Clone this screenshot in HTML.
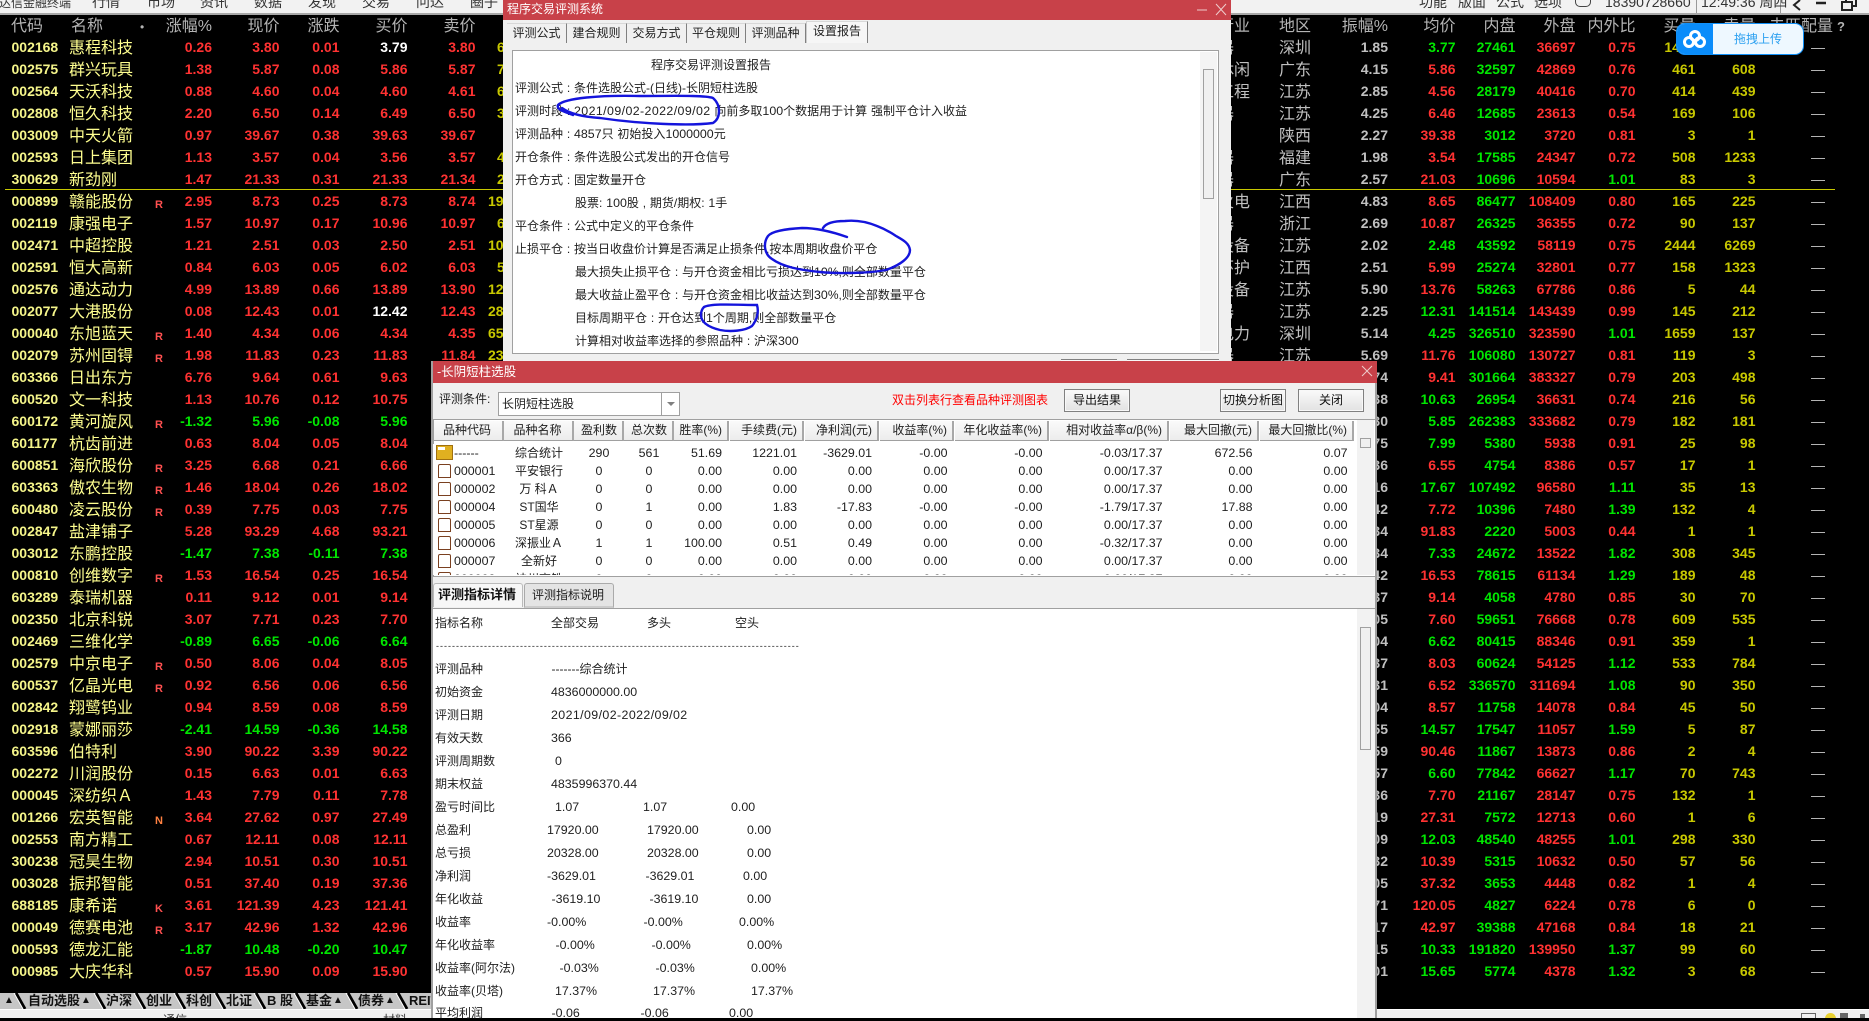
<!DOCTYPE html>
<html lang="zh"><head><meta charset="utf-8"><title>程序交易评测系统</title>
<style>
html,body{margin:0;padding:0;background:#000}
body{width:1869px;height:1018px;overflow:hidden;position:relative;font-family:"Liberation Sans","Noto Sans CJK SC",sans-serif}
p{position:absolute;margin:0;white-space:nowrap;line-height:16px}
.box{position:absolute}
.lay{position:absolute;left:0;top:0;width:0;height:0}
#L,#R{position:absolute;left:0;top:36px;width:1869px;z-index:1}
#L>div,#R>div{position:relative;height:22px}
#L b,#L u,#L em,#L i,#R u,#R i{position:absolute;top:0;line-height:22px;height:22px;font-style:normal;text-decoration:none;white-space:nowrap}
#L b{left:11.5px;font-size:14px;color:#f5f58a}
#L u{left:69px;top:2px;font-size:16px;color:#ffff90;font-weight:400}
#L em{left:155px;font-size:11px;font-weight:700;color:#ff5050;top:4px}
#L i,#R i{width:60px;text-align:right;font-size:14px;font-weight:700;color:#ff3232}
#L i:nth-of-type(1){left:152px}
#L i:nth-of-type(2){left:219.5px}
#L i:nth-of-type(3){left:279.5px}
#L i:nth-of-type(4){left:347.5px}
#L i:nth-of-type(5){left:415.5px}
#L i:nth-of-type(6){left:497px;text-align:left;color:#c8c800}
#L .g i{color:#00e600}
#L i.w{color:#fff}
#R u{top:2px;font-size:16px;color:#c0c0c0}
#R u:nth-of-type(1){left:1218px}
#R u:nth-of-type(2){left:1279px}
#R i:nth-of-type(1){left:1328px;color:#c0c0c0}
#R i:nth-of-type(2){left:1395.5px}
#R i:nth-of-type(3){left:1455.5px;color:#00e600}
#R i:nth-of-type(4){left:1515.5px}
#R i:nth-of-type(5){left:1575.5px}
#R i:nth-of-type(6){left:1635.5px;color:#c8c800}
#R i:nth-of-type(7){left:1695.5px;color:#c8c800}
#R i:nth-of-type(8){left:1765px;color:#c0c0c0;font-weight:400;width:60px}
#R i.g{color:#00e600}
.hd{z-index:1;font-size:16px;color:#b4b4b4;line-height:22px;top:16px}
.hr{width:70px;text-align:right}
.mn{z-index:3;font-size:14px;color:#333;top:-6px}
.d{font-size:12px;color:#202020}
.v{font-size:12.4px}
.dt{font-size:12.4px;letter-spacing:.4px}
.tab{position:absolute;top:23px;height:19px;background:#f0f0f0;border-right:1px solid #808080;border-top:1px solid #d8d8d8;font-size:12px;line-height:19px;text-align:center;color:#202020}
.btn{position:absolute;border:1px solid #808080;background:linear-gradient(#fafafa,#e2e2e2);font-size:12px;line-height:21px;text-align:center;color:#111;box-shadow:inset 0 0 0 1px #f8f8f8;height:21px;width:64px;top:389px}
.th{position:absolute;top:421px;height:19px;background:linear-gradient(#fafafa,#ececec);border-right:2px solid #a8a8a8;border-bottom:1px solid #a0a0a0;font-size:12px;line-height:19px;color:#202020;white-space:nowrap;box-sizing:content-box}
#G{position:absolute;left:433px;top:444px;width:924px;height:131px;overflow:hidden;background:#fff}
#G>div{position:relative;height:18px}
#G s,#G i{position:absolute;top:0;line-height:18px;height:18px;font-style:normal;text-decoration:none;font-size:12.4px;color:#202020;white-space:nowrap}
#G s:nth-of-type(1){left:21px}
#G s:nth-of-type(2){left:71px;width:70px;text-align:center;font-size:12px}
#G s:nth-of-type(3){left:146px;width:40px;text-align:center}
#G s:nth-of-type(4){left:196px;width:40px;text-align:center}
#G i{width:80px;text-align:right}
#G i:nth-of-type(1){left:209px}
#G i:nth-of-type(2){left:284px}
#G i:nth-of-type(3){left:359px}
#G i:nth-of-type(4){left:434.5px}
#G i:nth-of-type(5){left:529.5px}
#G i:nth-of-type(6){left:649.5px}
#G i:nth-of-type(7){left:739.5px}
#G i:nth-of-type(8){left:834.5px}
.doc{position:absolute;left:5px;top:2px;width:11px;height:12px;border:1px solid #7a4020;border-radius:2px 2px 0 0;background:#fff}
.fold{position:absolute;left:3px;top:1px;width:15px;height:13px;background:#e0b020;border:1px solid #a07010}
.fold:before{content:"";position:absolute;left:1px;top:1px;width:7px;height:3px;background:#fff}
.ln{font-size:12px;color:#202020;z-index:1}
</style></head><body>

<!-- top bar -->
<div class="box" style="left:0;top:0;width:1869px;height:13px;background:#f2f2f2;border-bottom:2px solid #a8a8a8;z-index:2"></div>
<div class="box" style="left:0;top:0;width:1869px;height:13px;overflow:hidden;z-index:3">
<p style="left:-1px;top:-5px;font-size:12px;color:#333">达信金融终端</p>
<p class="mn" style="left:92px">行情</p><p class="mn" style="left:147px">市场</p><p class="mn" style="left:200px">资讯</p><p class="mn" style="left:254px">数据</p><p class="mn" style="left:308px">发现</p><p class="mn" style="left:362px">交易</p><p class="mn" style="left:416px">问达</p><p class="mn" style="left:470px">圈子</p>
<p class="mn" style="left:1419px">功能</p><p class="mn" style="left:1458px">版面</p><p class="mn" style="left:1496px">公式</p><p class="mn" style="left:1534px">选项</p>
<p class="mn" style="left:1605px">18390728660</p><p class="mn" style="left:1701px">12:49:36 周四</p>
<div class="box" style="left:1575px;top:0;width:14px;height:6px;border:1px solid #444;border-top:0;border-radius:0 0 5px 5px"></div>
<div class="box" style="left:1696px;top:0;width:1px;height:13px;background:#999"></div>
<div class="box" style="left:1780px;top:0;width:1px;height:13px;background:#999"></div>
<svg class="box" style="left:1790px;top:0" width="79" height="13"><path d="M10 0L4 5L10 10" fill="none" stroke="#222" stroke-width="2"/><path d="M26 3H36" stroke="#222" stroke-width="2.5"/><path d="M52 2H62V10H52ZM56 2V-2H66V6H62" fill="none" stroke="#222" stroke-width="2"/></svg>
</div>

<!-- headers -->
<p class="hd" style="left:11px">代码</p><p class="hd" style="left:71px">名称</p><p class="hd" style="left:140px;font-size:12px">•</p>
<p class="hd hr" style="left:142px">涨幅%</p><p class="hd hr" style="left:209.5px">现价</p><p class="hd hr" style="left:269.5px">涨跌</p><p class="hd hr" style="left:337.5px">买价</p><p class="hd hr" style="left:405.5px">卖价</p>
<p class="hd" style="left:1218px">行业</p><p class="hd" style="left:1279px">地区</p><p class="hd hr" style="left:1318px">振幅%</p><p class="hd hr" style="left:1385.5px">均价</p><p class="hd hr" style="left:1445.5px">内盘</p><p class="hd hr" style="left:1505.5px">外盘</p><p class="hd hr" style="left:1565.5px">内外比</p><p class="hd hr" style="left:1625.5px">买量</p><p class="hd hr" style="left:1685.5px">卖量</p><p class="hd" style="left:1769px">未匹配量</p><p class="hd" style="left:1837px;font-size:13px;font-weight:700">?</p>

<div id="L">
<div><b>002168</b><u>惠程科技</u><i>0.26</i><i>3.80</i><i>0.01</i><i class="w">3.79</i><i>3.80</i><i>690</i></div>
<div><b>002575</b><u>群兴玩具</u><i>1.38</i><i>5.87</i><i>0.08</i><i>5.86</i><i>5.87</i><i>710</i></div>
<div><b>002564</b><u>天沃科技</u><i>0.88</i><i>4.60</i><i>0.04</i><i>4.60</i><i>4.61</i><i>650</i></div>
<div><b>002808</b><u>恒久科技</u><i>2.20</i><i>6.50</i><i>0.14</i><i>6.49</i><i>6.50</i><i>320</i></div>
<div><b>003009</b><u>中天火箭</u><i>0.97</i><i>39.67</i><i>0.38</i><i>39.63</i><i>39.67</i></div>
<div><b>002593</b><u>日上集团</u><i>1.13</i><i>3.57</i><i>0.04</i><i>3.56</i><i>3.57</i><i>410</i></div>
<div><b>300629</b><u>新劲刚</u><i>1.47</i><i>21.33</i><i>0.31</i><i>21.33</i><i>21.34</i><i>210</i></div>
<div><b>000899</b><u>赣能股份</u><em>R</em><i>2.95</i><i>8.73</i><i>0.25</i><i>8.73</i><i>8.74</i><i style="left:488px">190</i></div>
<div><b>002119</b><u>康强电子</u><i>1.57</i><i>10.97</i><i>0.17</i><i>10.96</i><i>10.97</i><i>610</i></div>
<div><b>002471</b><u>中超控股</u><i>1.21</i><i>2.51</i><i>0.03</i><i>2.50</i><i>2.51</i><i style="left:488px">100</i></div>
<div><b>002591</b><u>恒大高新</u><i>0.84</i><i>6.03</i><i>0.05</i><i>6.02</i><i>6.03</i><i>530</i></div>
<div><b>002576</b><u>通达动力</u><i>4.99</i><i>13.89</i><i>0.66</i><i>13.89</i><i>13.90</i><i style="left:488px">120</i></div>
<div><b>002077</b><u>大港股份</u><i>0.08</i><i>12.43</i><i>0.01</i><i class="w">12.42</i><i>12.43</i><i style="left:488px">280</i></div>
<div><b>000040</b><u>东旭蓝天</u><em>R</em><i>1.40</i><i>4.34</i><i>0.06</i><i>4.34</i><i>4.35</i><i style="left:488px">650</i></div>
<div><b>002079</b><u>苏州固锝</u><em>R</em><i>1.98</i><i>11.83</i><i>0.23</i><i>11.83</i><i>11.84</i><i style="left:488px">230</i></div>
<div><b>603366</b><u>日出东方</u><i>6.76</i><i>9.64</i><i>0.61</i><i>9.63</i></div>
<div><b>600520</b><u>文一科技</u><i>1.13</i><i>10.76</i><i>0.12</i><i>10.75</i></div>
<div class="g"><b>600172</b><u>黄河旋风</u><em>R</em><i>-1.32</i><i>5.96</i><i>-0.08</i><i>5.96</i></div>
<div><b>601177</b><u>杭齿前进</u><i>0.63</i><i>8.04</i><i>0.05</i><i>8.04</i></div>
<div><b>600851</b><u>海欣股份</u><em>R</em><i>3.25</i><i>6.68</i><i>0.21</i><i>6.66</i></div>
<div><b>603363</b><u>傲农生物</u><em>R</em><i>1.46</i><i>18.04</i><i>0.26</i><i>18.02</i></div>
<div><b>600480</b><u>凌云股份</u><em>R</em><i>0.39</i><i>7.75</i><i>0.03</i><i>7.75</i></div>
<div><b>002847</b><u>盐津铺子</u><i>5.28</i><i>93.29</i><i>4.68</i><i>93.21</i></div>
<div class="g"><b>003012</b><u>东鹏控股</u><i>-1.47</i><i>7.38</i><i>-0.11</i><i>7.38</i></div>
<div><b>000810</b><u>创维数字</u><em>R</em><i>1.53</i><i>16.54</i><i>0.25</i><i>16.54</i></div>
<div><b>603289</b><u>泰瑞机器</u><i>0.11</i><i>9.12</i><i>0.01</i><i>9.14</i></div>
<div><b>002350</b><u>北京科锐</u><i>3.07</i><i>7.71</i><i>0.23</i><i>7.70</i></div>
<div class="g"><b>002469</b><u>三维化学</u><i>-0.89</i><i>6.65</i><i>-0.06</i><i>6.64</i></div>
<div><b>002579</b><u>中京电子</u><em>R</em><i>0.50</i><i>8.06</i><i>0.04</i><i>8.05</i></div>
<div><b>600537</b><u>亿晶光电</u><em>R</em><i>0.92</i><i>6.56</i><i>0.06</i><i>6.56</i></div>
<div><b>002842</b><u>翔鹭钨业</u><i>0.94</i><i>8.59</i><i>0.08</i><i>8.59</i></div>
<div class="g"><b>002918</b><u>蒙娜丽莎</u><i>-2.41</i><i>14.59</i><i>-0.36</i><i>14.58</i></div>
<div><b>603596</b><u>伯特利</u><i>3.90</i><i>90.22</i><i>3.39</i><i>90.22</i></div>
<div><b>002272</b><u>川润股份</u><i>0.15</i><i>6.63</i><i>0.01</i><i>6.63</i></div>
<div><b>000045</b><u>深纺织Ａ</u><i>1.43</i><i>7.79</i><i>0.11</i><i>7.78</i></div>
<div><b>001266</b><u>宏英智能</u><em style="color:#ff8040">N</em><i>3.64</i><i>27.62</i><i>0.97</i><i>27.49</i></div>
<div><b>002553</b><u>南方精工</u><i>0.67</i><i>12.11</i><i>0.08</i><i>12.11</i></div>
<div><b>300238</b><u>冠昊生物</u><i>2.94</i><i>10.51</i><i>0.30</i><i>10.51</i></div>
<div><b>003028</b><u>振邦智能</u><i>0.51</i><i>37.40</i><i>0.19</i><i>37.36</i></div>
<div><b>688185</b><u>康希诺</u><em>K</em><i>3.61</i><i>121.39</i><i>4.23</i><i>121.41</i></div>
<div><b>000049</b><u>德赛电池</u><em>R</em><i>3.17</i><i>42.96</i><i>1.32</i><i>42.96</i></div>
<div class="g"><b>000593</b><u>德龙汇能</u><i>-1.87</i><i>10.48</i><i>-0.20</i><i>10.47</i></div>
<div><b>000985</b><u>大庆华科</u><i>0.57</i><i>15.90</i><i>0.09</i><i>15.90</i></div>
</div>

<div id="R">
<div><u>器</u><u>深圳</u><i>1.85</i><i class="g">3.77</i><i>27461</i><i>36697</i><i>0.75</i><i>1433</i><i>608</i><i>—</i></div>
<div><u>休闲</u><u>广东</u><i>4.15</i><i>5.86</i><i>32597</i><i>42869</i><i>0.76</i><i>461</i><i>608</i><i>—</i></div>
<div><u>工程</u><u>江苏</u><i>2.85</i><i>4.56</i><i>28179</i><i>40416</i><i>0.70</i><i>414</i><i>439</i><i>—</i></div>
<div><u>器</u><u>江苏</u><i>4.25</i><i>6.46</i><i>12685</i><i>23613</i><i>0.54</i><i>169</i><i>106</i><i>—</i></div>
<div><u></u><u>陕西</u><i>2.27</i><i>39.38</i><i>3012</i><i>3720</i><i>0.81</i><i>3</i><i>1</i><i>—</i></div>
<div><u>器</u><u>福建</u><i>1.98</i><i>3.54</i><i>17585</i><i>24347</i><i>0.72</i><i>508</i><i>1233</i><i>—</i></div>
<div><u>器</u><u>广东</u><i>2.57</i><i>21.03</i><i>10696</i><i>10594</i><i class="g">1.01</i><i>83</i><i>3</i><i>—</i></div>
<div><u>火电</u><u>江西</u><i>4.83</i><i>8.65</i><i>86477</i><i>108409</i><i>0.80</i><i>165</i><i>225</i><i>—</i></div>
<div><u>器</u><u>浙江</u><i>2.69</i><i>10.87</i><i>26325</i><i>36355</i><i>0.72</i><i>90</i><i>137</i><i>—</i></div>
<div><u>设备</u><u>江苏</u><i>2.02</i><i class="g">2.48</i><i>43592</i><i>58119</i><i>0.75</i><i>2444</i><i>6269</i><i>—</i></div>
<div><u>环护</u><u>江西</u><i>2.51</i><i>5.99</i><i>25274</i><i>32801</i><i>0.77</i><i>158</i><i>1323</i><i>—</i></div>
<div><u>设备</u><u>江苏</u><i>5.90</i><i>13.76</i><i>58263</i><i>67786</i><i>0.86</i><i>5</i><i>44</i><i>—</i></div>
<div><u>器</u><u>江苏</u><i>2.25</i><i class="g">12.31</i><i>141514</i><i>143439</i><i>0.99</i><i>145</i><i>212</i><i>—</i></div>
<div><u>电力</u><u>深圳</u><i>5.14</i><i class="g">4.25</i><i>326510</i><i>323590</i><i class="g">1.01</i><i>1659</i><i>137</i><i>—</i></div>
<div><u>器</u><u>江苏</u><i>5.69</i><i>11.76</i><i>106080</i><i>130727</i><i>0.81</i><i>119</i><i>3</i><i>—</i></div>
<div><u></u><u></u><i>5.74</i><i>9.41</i><i>301664</i><i>383327</i><i>0.79</i><i>203</i><i>498</i><i>—</i></div>
<div><u></u><u></u><i>3.38</i><i class="g">10.63</i><i>26954</i><i>36631</i><i>0.74</i><i>216</i><i>56</i><i>—</i></div>
<div><u></u><u></u><i>3.30</i><i class="g">5.85</i><i>262383</i><i>333682</i><i>0.79</i><i>182</i><i>181</i><i>—</i></div>
<div><u></u><u></u><i>3.75</i><i class="g">7.99</i><i>5380</i><i>5938</i><i>0.91</i><i>25</i><i>98</i><i>—</i></div>
<div><u></u><u></u><i>3.36</i><i>6.55</i><i>4754</i><i>8386</i><i>0.57</i><i>17</i><i>1</i><i>—</i></div>
<div><u></u><u></u><i>3.16</i><i class="g">17.67</i><i>107492</i><i>96580</i><i class="g">1.11</i><i>35</i><i>13</i><i>—</i></div>
<div><u></u><u></u><i>3.42</i><i>7.72</i><i>10396</i><i>7480</i><i class="g">1.39</i><i>132</i><i>4</i><i>—</i></div>
<div><u></u><u></u><i>3.34</i><i>91.83</i><i>2220</i><i>5003</i><i>0.44</i><i>1</i><i>1</i><i>—</i></div>
<div><u></u><u></u><i>3.34</i><i class="g">7.33</i><i>24672</i><i>13522</i><i class="g">1.82</i><i>308</i><i>345</i><i>—</i></div>
<div><u></u><u></u><i>3.42</i><i>16.53</i><i>78615</i><i>61134</i><i class="g">1.29</i><i>189</i><i>48</i><i>—</i></div>
<div><u></u><u></u><i>3.37</i><i>9.14</i><i>4058</i><i>4780</i><i>0.85</i><i>30</i><i>70</i><i>—</i></div>
<div><u></u><u></u><i>3.05</i><i>7.60</i><i>59651</i><i>76668</i><i>0.78</i><i>609</i><i>535</i><i>—</i></div>
<div><u></u><u></u><i>3.04</i><i class="g">6.62</i><i>80415</i><i>88346</i><i>0.91</i><i>359</i><i>1</i><i>—</i></div>
<div><u></u><u></u><i>3.37</i><i>8.03</i><i>60624</i><i>54125</i><i class="g">1.12</i><i>533</i><i>784</i><i>—</i></div>
<div><u></u><u></u><i>3.31</i><i>6.52</i><i>336570</i><i>311694</i><i class="g">1.08</i><i>90</i><i>350</i><i>—</i></div>
<div><u></u><u></u><i>3.04</i><i>8.57</i><i>11758</i><i>14078</i><i>0.84</i><i>45</i><i>50</i><i>—</i></div>
<div><u></u><u></u><i>3.55</i><i class="g">14.57</i><i>17547</i><i>11057</i><i class="g">1.59</i><i>5</i><i>87</i><i>—</i></div>
<div><u></u><u></u><i>3.59</i><i>90.46</i><i>11867</i><i>13873</i><i>0.86</i><i>2</i><i>4</i><i>—</i></div>
<div><u></u><u></u><i>3.57</i><i class="g">6.60</i><i>77842</i><i>66627</i><i class="g">1.17</i><i>70</i><i>743</i><i>—</i></div>
<div><u></u><u></u><i>3.36</i><i>7.70</i><i>21167</i><i>28147</i><i>0.75</i><i>132</i><i>1</i><i>—</i></div>
<div><u></u><u></u><i>3.19</i><i>27.31</i><i>7572</i><i>12713</i><i>0.60</i><i>1</i><i>6</i><i>—</i></div>
<div><u></u><u></u><i>3.09</i><i class="g">12.03</i><i>48540</i><i>48255</i><i class="g">1.01</i><i>298</i><i>330</i><i>—</i></div>
<div><u></u><u></u><i>3.32</i><i>10.39</i><i>5315</i><i>10632</i><i>0.50</i><i>57</i><i>56</i><i>—</i></div>
<div><u></u><u></u><i>3.05</i><i>37.32</i><i>3653</i><i>4448</i><i>0.82</i><i>1</i><i>4</i><i>—</i></div>
<div><u></u><u></u><i>3.71</i><i>120.05</i><i>4827</i><i>6224</i><i>0.78</i><i>6</i><i>0</i><i>—</i></div>
<div><u></u><u></u><i>3.17</i><i>42.97</i><i>39388</i><i>47168</i><i>0.84</i><i>18</i><i>21</i><i>—</i></div>
<div><u></u><u></u><i>3.15</i><i class="g">10.33</i><i>191820</i><i>139950</i><i class="g">1.37</i><i>99</i><i>60</i><i>—</i></div>
<div><u></u><u></u><i>3.01</i><i class="g">15.65</i><i>5774</i><i>4378</i><i class="g">1.32</i><i>3</i><i>68</i><i>—</i></div>
</div>

<div class="box" style="left:5px;top:189px;width:1830px;height:1px;background:#c8c800;z-index:2"></div>

<!-- bottom tab bar -->
<div class="box" style="left:0;top:993px;width:431px;height:16px;background:#c6c6c6;z-index:2"></div>
<svg class="box" style="left:0;top:993px;z-index:2" width="431" height="16"><g fill="none" stroke="#000" stroke-width="3"><path d="M16 0L25 16M96 0L105 16M136 0L145 16M176 0L185 16M216 0L225 16M256 0L265 16M296 0L305 16M348 0L357 16M398 0L407 16"/></g><g fill="none" stroke="#fff" stroke-width="1"><path d="M14 0L23 16M94 0L103 16M134 0L143 16M174 0L183 16M214 0L223 16M254 0L263 16M294 0L303 16M346 0L355 16M396 0L405 16"/></g></svg>
<div class="box" style="left:0;top:993px;width:431px;height:16px;overflow:hidden;z-index:3;font-size:13px;font-weight:700;color:#111;line-height:16px">
<p style="left:4px;font-size:10px">▲</p><p style="left:28px">自动选股</p><p style="left:81px;font-size:10px">▲</p><p style="left:106px">沪深</p><p style="left:146px">创业</p><p style="left:186px">科创</p><p style="left:226px">北证</p><p style="left:267px">B 股</p><p style="left:306px">基金</p><p style="left:333px;font-size:10px">▲</p><p style="left:358px">债券</p><p style="left:385px;font-size:10px">▲</p><p style="left:409px">REIT</p>
</div>
<div class="box" style="left:0;top:1009px;width:1869px;height:1px;background:#fff;z-index:2"></div>
<div class="box" style="left:0;top:1010px;width:1869px;height:8px;background:#f0f0f0;z-index:2;overflow:hidden">
<p style="left:163px;top:2px;font-size:12px;color:#333">通信</p><p style="left:383px;top:2px;font-size:12px;color:#333">材料</p>
<div class="box" style="left:1801px;top:3px;width:13px;height:8px;border:1px solid #666"></div>
<div class="box" style="left:1825px;top:3px;width:11px;height:11px;border-radius:50%;background:#e8d030"></div>
<div class="box" style="left:1840px;top:3px;width:8px;height:8px;background:#666"></div>
<div class="box" style="left:1860px;top:4px;width:5px;height:5px;background:#666"></div>
</div>

<!-- upload widget -->
<div class="box" style="left:1676px;top:23px;width:128px;height:32px;border-radius:9px;background:#eef8ff;box-sizing:border-box;border:1px solid #1090f8;z-index:3;overflow:hidden">
<div class="box" style="left:-1px;top:-1px;width:37px;height:32px;background:#0a8cfa"></div>
<p style="left:36px;top:7px;width:90px;text-align:center;font-size:12px;color:#2ba0f0">拖拽上传</p>
</div>
<svg class="box" style="left:1680px;top:28px;z-index:3" width="30" height="24"><g fill="none" stroke="#fff" stroke-width="3"><circle cx="15" cy="8" r="4.5"/><circle cx="9" cy="14" r="4.5"/><circle cx="20" cy="14" r="4.5"/></g></svg>

<!-- dialog 1 -->
<div class="lay" style="z-index:4">
<div class="box" style="left:503px;top:0;width:728px;height:361px;background:#f0f0f0"></div>
<div class="box" style="left:503px;top:0;width:728px;height:20px;background:#c84149"></div>
<p style="left:507px;top:1px;font-size:12px;color:#fff">程序交易评测系统</p>
<svg class="box" style="left:1195px;top:2px" width="34" height="16"><path d="M2 8H12" stroke="#eecccc" stroke-width="1"/><path d="M21 2L31 13M31 2L21 13" stroke="#eecccc" stroke-width="1"/></svg>
<div class="tab" style="left:507px;width:59px">评测公式</div>
<div class="tab" style="left:567px;width:59px">建合规则</div>
<div class="tab" style="left:627px;width:59px">交易方式</div>
<div class="tab" style="left:687px;width:58px">平仓规则</div>
<div class="tab" style="left:746px;width:59px">评测品种</div>
<div class="tab" style="left:806px;width:60px;top:21px;height:21px;background:#f6f6f6;border-left:1px solid #ccc">设置报告</div>
<div class="box" style="left:512px;top:50px;width:705px;height:302px;background:#fff;border:1px solid #a0a0a0"></div>
<div class="box" style="left:1200px;top:52px;width:17px;height:299px;background:#f4f4f4"></div>
<div class="box" style="left:1203px;top:69px;width:9px;height:128px;border:1px solid #a0a0a0;background:#f0f0f0"></div>
<div class="box" style="left:1061px;top:359px;width:56px;height:2px;background:#f8f8f8;border-top:1px solid #808080"></div>
<div class="box" style="left:1127px;top:359px;width:92px;height:2px;background:#f8f8f8;border-top:1px solid #808080"></div>
<div class="d" style="word-spacing:.5px">
<p style="left:651px;top:57px">程序交易评测设置报告</p>
<p style="left:515px;top:80px">评测公式 : 条件选股公式-(日线)-长阴短柱选股</p>
<p style="left:515px;top:103px">评测时段 : <span class="dt">2021/09/02-2022/09/02</span> 向前多取<span class="v">100</span>个数据用于计算 强制平仓计入收益</p>
<p style="left:515px;top:126px">评测品种 : <span class="v">4857</span>只 初始投入<span class="v">1000000</span>元</p>
<p style="left:515px;top:149px">开仓条件 : 条件选股公式发出的开仓信号</p>
<p style="left:515px;top:172px">开仓方式 : 固定数量开仓</p>
<p style="left:575px;top:195px">股票: <span class="v">100</span>股 , 期货/期权: <span class="v">1</span>手</p>
<p style="left:515px;top:218px">平仓条件 : 公式中定义的平仓条件</p>
<p style="left:515px;top:241px">止损平仓 : 按当日收盘价计算是否满足止损条件,按本周期收盘价平仓</p>
<p style="left:575px;top:264px">最大损失止损平仓 : 与开仓资金相比亏损达到<span class="v">10</span>%,则全部数量平仓</p>
<p style="left:575px;top:287px">最大收益止盈平仓 : 与开仓资金相比收益达到<span class="v">30</span>%,则全部数量平仓</p>
<p style="left:575px;top:310px">目标周期平仓 : 开仓达到<span class="v">1</span>个周期,则全部数量平仓</p>
<p style="left:575px;top:333px">计算相对收益率选择的参照品种 : 沪深<span class="v">300</span></p>
</div>
<svg class="box" style="left:0;top:0" width="1300" height="361"><g fill="none" stroke="#1414dc" stroke-width="2.4" stroke-linecap="round">
<path d="M573 115C566 112 556 110 558 105C565 98 600 95 640 96C670 96 705 95 713 98C721 105 721 118 713 123C690 126 640 124 600 118C585 117 570 114 562 108"/>
<path d="M847 237C830 231 815 228 802 228C785 229 772 231 768 236C763 243 764 254 772 259C783 267 800 270 820 272C840 274 870 273 886 270C900 265 910 258 910 250C909 243 903 240 896 236C890 232 885 229 877 226C865 221 855 220 845 221C835 221 826 223 823 228"/>
<path d="M704 307C712 303 740 305 757 305C759 312 757 320 752 326C745 331 730 332 720 330C708 327 701 322 701 315C701 311 702 309 704 307"/>
</g></svg>
</div>

<!-- dialog 2 -->
<div class="lay" style="z-index:5">
<div class="box" style="left:431px;top:361px;width:946px;height:657px;background:#f0f0f0"></div>
<div class="box" style="left:431px;top:361px;width:946px;height:22px;background:#c84149"></div>
<p style="left:437px;top:364px;font-size:12.5px;color:#fff">-长阴短柱选股</p>
<svg class="box" style="left:1360px;top:364px" width="14" height="14"><path d="M2 2L12 12M12 2L2 12" stroke="#eecccc" stroke-width="1"/></svg>
<p class="d" style="left:439px;top:391px">评测条件:</p>
<div class="box" style="left:498px;top:392px;width:180px;height:22px;background:#fff;border:1px solid #a0a0a0"></div>
<div class="box" style="left:661px;top:392px;width:1px;height:24px;background:#a0a0a0"></div>
<div class="box" style="left:667px;top:402px;width:0;height:0;border-left:4px solid transparent;border-right:4px solid transparent;border-top:4px solid #808080"></div>
<p class="d" style="left:502px;top:396px">长阴短柱选股</p>
<p style="left:892px;top:392px;font-size:12px;color:#f00">双击列表行查看品种评测图表</p>
<div class="btn" style="left:1064px">导出结果</div>
<div class="btn" style="left:1220px">切换分析图</div>
<div class="btn" style="left:1298px">关闭</div>

<div class="box" style="left:433px;top:419px;width:941px;height:156px;background:#fff;border:1px solid #a0a0a0"></div>
<div class="box" style="left:1357px;top:420px;width:17px;height:155px;background:#f2f2f2"></div>
<div class="box" style="left:1360px;top:438px;width:9px;height:8px;border:1px solid #a0a0a0;background:#f0f0f0"></div>

<div class="th" style="left:434px;width:68px;text-align:center;text-indent:-2px">品种代码</div>
<div class="th" style="left:504px;width:68px;text-align:center;text-indent:-1px">品种名称</div>
<div class="th" style="left:574px;width:48px;text-align:center;text-indent:2px">盈利数</div>
<div class="th" style="left:624px;width:48px;text-align:center;text-indent:2px">总次数</div>
<div class="th" style="left:674px;width:48px;text-align:right;padding-right:5px">胜率(%)</div>
<div class="th" style="left:730px;width:67px;text-align:right;padding-right:5px">手续费(元)</div>
<div class="th" style="left:805px;width:67px;text-align:right;padding-right:5px">净利润(元)</div>
<div class="th" style="left:880px;width:67px;text-align:right;padding-right:5px">收益率(%)</div>
<div class="th" style="left:955px;width:87px;text-align:right;padding-right:5px">年化收益率(%)</div>
<div class="th" style="left:1050px;width:112px;text-align:right;padding-right:5px">相对收益率α/β(%)</div>
<div class="th" style="left:1170px;width:82px;text-align:right;padding-right:5px">最大回撤(元)</div>
<div class="th" style="left:1260px;width:87px;text-align:right;padding-right:5px">最大回撤比(%)</div>

<div id="G">
<div><span class="fold"></span><s>------</s><s>综合统计</s><s>290</s><s>561</s><i>51.69</i><i>1221.01</i><i>-3629.01</i><i>-0.00</i><i>-0.00</i><i>-0.03/17.37</i><i>672.56</i><i>0.07</i></div>
<div><span class="doc"></span><s>000001</s><s>平安银行</s><s>0</s><s>0</s><i>0.00</i><i>0.00</i><i>0.00</i><i>0.00</i><i>0.00</i><i>0.00/17.37</i><i>0.00</i><i>0.00</i></div>
<div><span class="doc"></span><s>000002</s><s>万 科Ａ</s><s>0</s><s>0</s><i>0.00</i><i>0.00</i><i>0.00</i><i>0.00</i><i>0.00</i><i>0.00/17.37</i><i>0.00</i><i>0.00</i></div>
<div><span class="doc"></span><s>000004</s><s>ST国华</s><s>0</s><s>1</s><i>0.00</i><i>1.83</i><i>-17.83</i><i>-0.00</i><i>-0.00</i><i>-1.79/17.37</i><i>17.88</i><i>0.00</i></div>
<div><span class="doc"></span><s>000005</s><s>ST星源</s><s>0</s><s>0</s><i>0.00</i><i>0.00</i><i>0.00</i><i>0.00</i><i>0.00</i><i>0.00/17.37</i><i>0.00</i><i>0.00</i></div>
<div><span class="doc"></span><s>000006</s><s>深振业Ａ</s><s>1</s><s>1</s><i>100.00</i><i>0.51</i><i>0.49</i><i>0.00</i><i>0.00</i><i>-0.32/17.37</i><i>0.00</i><i>0.00</i></div>
<div><span class="doc"></span><s>000007</s><s>全新好</s><s>0</s><s>0</s><i>0.00</i><i>0.00</i><i>0.00</i><i>0.00</i><i>0.00</i><i>0.00/17.37</i><i>0.00</i><i>0.00</i></div>
<div><span class="doc"></span><s>000008</s><s>神州高铁</s><s>0</s><s>0</s><i>0.00</i><i>0.00</i><i>0.00</i><i>0.00</i><i>0.00</i><i>0.00/17.37</i><i>0.00</i><i>0.00</i></div>
</div>

<div class="box" style="left:433px;top:583px;width:88px;height:23px;background:#f7f7f7;border:1px solid #bbb;border-bottom:0;border-radius:3px 3px 0 0"></div>
<p style="left:438px;top:587px;font-size:13px;font-weight:700;color:#111">评测指标详情</p>
<div class="box" style="left:524px;top:583px;width:88px;height:22px;background:#e4e4e4;border:1px solid #aaa;border-bottom:2px solid #ccc;border-radius:3px 3px 0 0"></div>
<p class="d" style="left:532px;top:587px">评测指标说明</p>

<div class="box" style="left:431px;top:608px;width:944px;height:1px;background:#a0a0a0"></div>
<div class="box" style="left:433px;top:609px;width:924px;height:409px;background:#fff"></div>
<div class="box" style="left:1357px;top:609px;width:18px;height:409px;background:#f2f2f2"></div>
<div class="box" style="left:1360px;top:627px;width:9px;height:121px;border:1px solid #a0a0a0;background:#f0f0f0"></div>
<div class="box" style="left:431px;top:361px;width:2px;height:657px;background:#a0a0a0"></div>
<div class="box" style="left:1375px;top:383px;width:2px;height:635px;background:#a0a0a0"></div>

<div class="ln">
<p style="left:435px;top:615px">指标名称</p><p style="left:551px;top:615px">全部交易</p><p style="left:647px;top:615px">多头</p><p style="left:735px;top:615px">空头</p>
<p style="left:436px;top:638px;font-size:9px;letter-spacing:1px">-------------------------------------------------------------------------------------------</p>
<p style="left:435px;top:661px">评测品种</p><p style="left:551.5px;top:661px">-------综合统计</p>
<p style="left:435px;top:684px">初始资金</p><p class="v" style="left:551px;top:684px">4836000000.00</p>
<p style="left:435px;top:707px">评测日期</p><p class="dt" style="left:551px;top:707px">2021/09/02-2022/09/02</p>
<p style="left:435px;top:730px">有效天数</p><p class="v" style="left:551px;top:730px">366</p>
<p style="left:435px;top:753px">评测周期数</p><p class="v" style="left:555px;top:753px">0</p>
<p style="left:435px;top:776px">期末权益</p><p class="v" style="left:551px;top:776px">4835996370.44</p>
<p style="left:435px;top:799px">盈亏时间比</p><p class="v" style="left:555px;top:799px">1.07</p><p class="v" style="left:643px;top:799px">1.07</p><p class="v" style="left:731px;top:799px">0.00</p>
<p style="left:435px;top:822px">总盈利</p><p class="v" style="left:547px;top:822px">17920.00</p><p class="v" style="left:647px;top:822px">17920.00</p><p class="v" style="left:747px;top:822px">0.00</p>
<p style="left:435px;top:845px">总亏损</p><p class="v" style="left:547px;top:845px">20328.00</p><p class="v" style="left:647px;top:845px">20328.00</p><p class="v" style="left:747px;top:845px">0.00</p>
<p style="left:435px;top:868px">净利润</p><p class="v" style="left:547px;top:868px">-3629.01</p><p class="v" style="left:645.5px;top:868px">-3629.01</p><p class="v" style="left:743px;top:868px">0.00</p>
<p style="left:435px;top:891px">年化收益</p><p class="v" style="left:551.5px;top:891px">-3619.10</p><p class="v" style="left:649.5px;top:891px">-3619.10</p><p class="v" style="left:747px;top:891px">0.00</p>
<p style="left:435px;top:914px">收益率</p><p class="v" style="left:547px;top:914px">-0.00%</p><p class="v" style="left:643.5px;top:914px">-0.00%</p><p class="v" style="left:739px;top:914px">0.00%</p>
<p style="left:435px;top:937px">年化收益率</p><p class="v" style="left:555.5px;top:937px">-0.00%</p><p class="v" style="left:651.5px;top:937px">-0.00%</p><p class="v" style="left:747px;top:937px">0.00%</p>
<p style="left:435px;top:960px">收益率(阿尔法)</p><p class="v" style="left:559.5px;top:960px">-0.03%</p><p class="v" style="left:655.5px;top:960px">-0.03%</p><p class="v" style="left:751px;top:960px">0.00%</p>
<p style="left:435px;top:983px">收益率(贝塔)</p><p class="v" style="left:555px;top:983px">17.37%</p><p class="v" style="left:653px;top:983px">17.37%</p><p class="v" style="left:751px;top:983px">17.37%</p>
<p style="left:435px;top:1005px">平均利润</p><p class="v" style="left:551.5px;top:1005px">-0.06</p><p class="v" style="left:640.5px;top:1005px">-0.06</p><p class="v" style="left:729px;top:1005px">0.00</p>
</div>
</div>
</body></html>
